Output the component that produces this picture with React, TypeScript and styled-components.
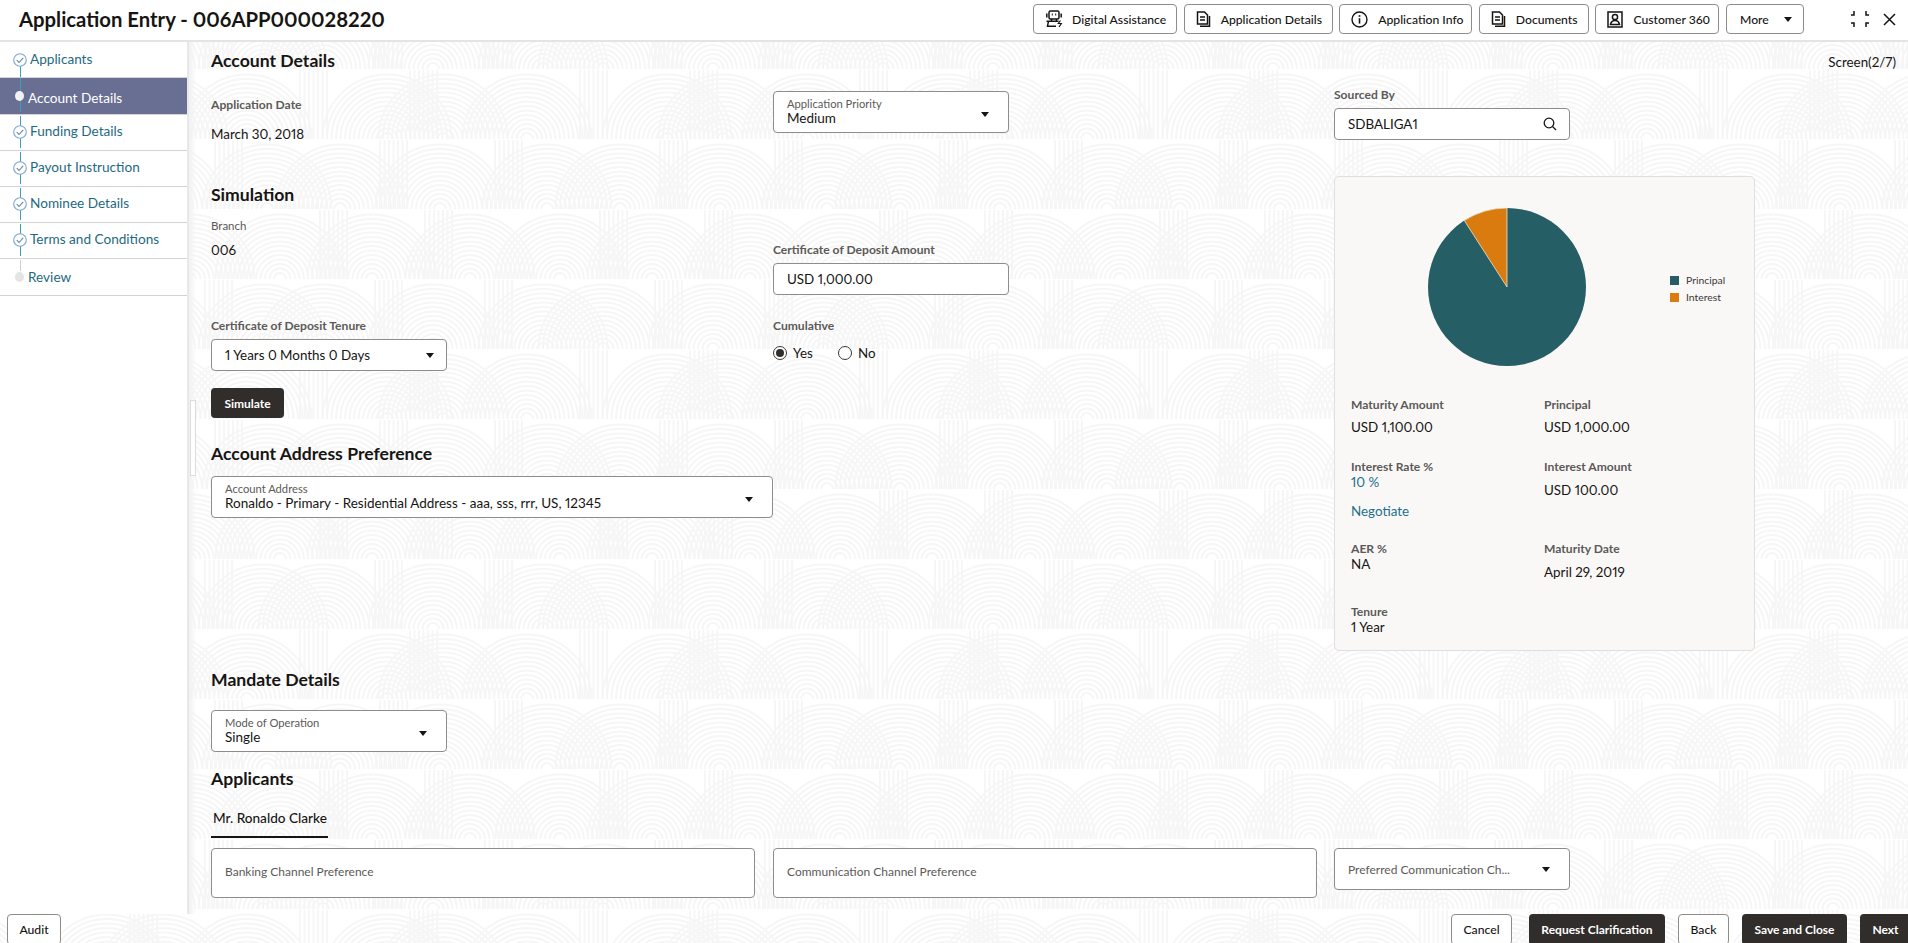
import React from "react";
import styled, { createGlobalStyle } from "styled-components";

const ROWS: number[][] = [
  [263, 153, 43],
  [107, 163, 247],
  [267, 160, 60],
  [190, 92, 0],
];
const STRIPES: number[][] = [
  [205, 95],
  [20, 130],
  [215, 100],
  [145, 40],
];

function buildTile(): string {
  let body = "";
  ROWS.forEach((centers, r) => {
    const top = r * 70;
    const bottom = top + 69;
    body += `<clipPath id="r${r}"><rect x="0" y="${top}" width="280" height="69"/></clipPath><g clip-path="url(#r${r})">`;
    centers.forEach((cx) => {
      for (const off of [-280, 0, 280]) {
        for (let rad = 6; rad <= 68; rad += 4.5) {
          body += `<circle cx="${cx + off}" cy="${bottom}" r="${rad}"/>`;
        }
      }
    });
    STRIPES[r].forEach((sx) => {
      for (let i = 0; i < 7; i += 1) {
        body += `<path d="M${sx + i * 4.5} ${top}V${bottom}"/>`;
      }
    });
    body += "</g>";
  });
  const svg = `<svg xmlns="http://www.w3.org/2000/svg" width="280" height="280"><g fill="none" stroke="#f6f6f6" stroke-width="2">${body}</g></svg>`;
  return `url("data:image/svg+xml,${encodeURIComponent(svg)}")`;
}

const Global = createGlobalStyle`
  html, body { margin: 0; padding: 0; height: 100%; overflow: hidden; background: #fff; }
  * { box-sizing: border-box; }
  body { font-family: Lato, "Noto Sans", sans-serif; color: #161513; font-variant-numeric: proportional-nums; }
`;

const Page = styled.div<{ $tile: string }>`
  width: 1908px;
  height: 943px;
  overflow: hidden;
  display: flex;
  flex-direction: column;
  background-color: #fff;
  background-image: ${(p) => p.$tile};
`;

const Header = styled.header`
  height: 42px;
  flex: none;
  background: #fff;
  border-bottom: 2px solid #e4e4e4;
  display: flex;
  align-items: center;
  padding: 0 12px 2px 19px;
`;
const Title = styled.h1`
  margin: 0;
  flex: 1;
  font-size: 20.3px;
  font-weight: 700;
  color: #161513;
`;
const Actions = styled.div`
  display: flex;
  gap: 6.6px;
  margin-right: 46px;
`;
const ActionButton = styled.button<{ $w: number; $pad?: number; $gap?: number }>`
  width: ${(p) => p.$w}px;
  height: 30px;
  background: #fff;
  border: 1px solid #8f8c8a;
  border-radius: 4px;
  padding: 0 0 0 ${(p) => p.$pad ?? 11}px;
  display: flex;
  align-items: center;
  font: 500 12.2px Lato, sans-serif;
  color: #161513;
  svg { flex: none; margin-right: ${(p) => p.$gap ?? 10}px; }
`;
const Caret = styled.span<{ $left?: number }>`
  display: inline-block;
  flex: none;
  width: 0;
  height: 0;
  margin-left: ${(p) => p.$left ?? 0}px;
  border-left: 4.5px solid transparent;
  border-right: 4.5px solid transparent;
  border-top: 5px solid #161513;
`;
const WindowTools = styled.div`
  display: flex;
  align-items: center;
  gap: 13px;
`;

const Body = styled.div`
  flex: 1;
  min-height: 0;
  display: flex;
`;
const Side = styled.nav`
  width: 189px;
  flex: none;
  background: #fff;
  border-right: 2px solid #e8e8e8;
`;
const StepRow = styled.div<{ $h: number; $active?: boolean; $offset: number; $indent: number }>`
  position: relative;
  height: ${(p) => p.$h}px;
  padding: ${(p) => p.$offset}px 0 0 ${(p) => p.$indent}px;
  line-height: 18px;
  font-size: 13.6px;
  color: ${(p) => (p.$active ? "#fff" : "#1f6a80")};
  background: ${(p) => (p.$active ? "#686f92" : "transparent")};
  border-bottom: 1px solid #d3d3d3;
`;
const Rail = styled.span<{ $top: number; $bottom: number; $pale?: boolean }>`
  position: absolute;
  left: 20px;
  width: 1px;
  top: ${(p) => p.$top}px;
  bottom: ${(p) => p.$bottom}px;
  background: ${(p) => (p.$pale ? "#cfcfcf" : "#3a9cc0")};
`;
const StepIcon = styled.svg<{ $y: number }>`
  position: absolute;
  left: 13px;
  top: ${(p) => p.$y}px;
`;
const StepDot = styled.span<{ $y: number; $pale?: boolean }>`
  position: absolute;
  left: 15px;
  top: ${(p) => p.$y}px;
  width: 9px;
  height: 10px;
  border-radius: 50%;
  background: ${(p) => (p.$pale ? "#e4e4e4" : "#f2f2f2")};
`;

const Main = styled.main`
  position: relative;
  flex: 1;
  min-width: 0;
  padding-left: 22px;
  overflow: hidden;
  &::before {
    content: "";
    position: absolute;
    left: 0;
    top: 0;
    bottom: 0;
    width: 7px;
    background: linear-gradient(90deg, #f1f1f1, rgba(241, 241, 241, 0));
  }
`;
const Handle = styled.div`
  position: absolute;
  left: 1px;
  top: 358px;
  width: 6px;
  height: 76px;
  border: 1px solid #dcdcdc;
  background: #fff;
`;
const ScreenCount = styled.div`
  position: absolute;
  top: 11px;
  right: 12px;
  font-size: 13.4px;
  line-height: 18px;
`;
const TopGrid = styled.div`
  display: grid;
  grid-template-columns: 1123px 421px;
`;
const Left = styled.div`
  display: flex;
  flex-direction: column;
`;
const Right = styled.div`
  padding-top: 45px;
`;
const Heading = styled.h2<{ $top: number }>`
  margin: ${(p) => p.$top}px 0 0;
  font-size: 17.6px;
  line-height: 24px;
  font-weight: 700;
  color: #161513;
`;
const TwoCols = styled.div<{ $top: number }>`
  display: grid;
  grid-template-columns: 562px 236px;
  margin-top: ${(p) => p.$top}px;
`;
const FieldLabel = styled.div<{ $top?: number; $light?: boolean }>`
  margin-top: ${(p) => p.$top ?? 0}px;
  font-size: ${(p) => (p.$light ? 11.5 : 12.1)}px;
  font-weight: ${(p) => (p.$light ? 400 : 700)};
  line-height: 16px;
  color: #5c5a58;
`;
const PlainValue = styled.div<{ $top: number }>`
  margin-top: ${(p) => p.$top}px;
  font-size: 13.4px;
  line-height: 20px;
  color: #161513;
`;
const InputBox = styled.div<{ $w?: number; $top?: number }>`
  width: ${(p) => (p.$w ? `${p.$w}px` : "100%")};
  height: 32px;
  margin-top: ${(p) => p.$top ?? 5}px;
  background: #fff;
  border: 1px solid #8f8c8a;
  border-radius: 4px;
  padding: 0 12px 0 13px;
  display: flex;
  align-items: center;
  justify-content: space-between;
  font-size: 13.4px;
`;
const SelectBox = styled.div<{ $w: number; $top?: number }>`
  width: ${(p) => p.$w}px;
  height: 42px;
  margin-top: ${(p) => p.$top ?? 0}px;
  background: #fff;
  border: 1px solid #8f8c8a;
  border-radius: 4px;
  padding: 5px 19px 0 13px;
  display: flex;
  justify-content: space-between;
  align-items: center;
`;
const SelectText = styled.div`
  align-self: flex-start;
  display: flex;
  flex-direction: column;
`;
const SelectLabel = styled.span`
  font-size: 11.2px;
  line-height: 14px;
  color: #5c5a58;
`;
const SelectValue = styled.span`
  font-size: 13.5px;
  line-height: 15px;
  color: #161513;
`;
const RadioRow = styled.div`
  display: flex;
  align-items: center;
  height: 20px;
  margin-top: 9px;
  font-size: 13.4px;
`;
const RadioMark = styled.span<{ $on?: boolean }>`
  width: 14px;
  height: 14px;
  border: 1.5px solid #3a3836;
  border-radius: 50%;
  background: #fff;
  margin-right: 6px;
  display: flex;
  align-items: center;
  justify-content: center;
  &::after {
    content: "";
    width: 8px;
    height: 8px;
    border-radius: 50%;
    background: ${(p) => (p.$on ? "#312d2a" : "transparent")};
  }
`;
const RadioOption = styled.label`
  display: flex;
  align-items: center;
  width: 65px;
`;
const DarkButton = styled.button<{ $w: number; $top?: number }>`
  width: ${(p) => p.$w}px;
  height: 30px;
  margin-top: ${(p) => p.$top ?? 0}px;
  border: none;
  border-radius: 4px;
  background: #312d2a;
  color: #fff;
  font: 700 12px Lato, sans-serif;
  padding: 0;
  flex: none;
`;
const OutlineButton = styled.button<{ $w: number }>`
  width: ${(p) => p.$w}px;
  height: 31px;
  border: 1px solid #8f8c8a;
  border-radius: 4px;
  background: #fff;
  color: #161513;
  font: 500 12.2px Lato, sans-serif;
  padding: 0;
  flex: none;
`;

const Card = styled.section`
  margin-top: 36px;
  height: 475px;
  background: #faf8f7;
  border: 1px solid #dfdfdf;
  border-radius: 5px;
  padding-left: 16px;
`;
const ChartRow = styled.div`
  height: 221px;
  position: relative;
`;
const Pie = styled.svg`
  position: absolute;
  left: 76px;
  top: 30px;
`;
const Legend = styled.ul`
  position: absolute;
  left: 319px;
  top: 97px;
  list-style: none;
  margin: 0;
  padding: 0;
  display: flex;
  flex-direction: column;
  gap: 5px;
`;
const LegendItem = styled.li`
  display: flex;
  align-items: center;
  font-size: 10.4px;
  line-height: 12px;
  color: #3a3836;
`;
const Swatch = styled.span<{ $c: string }>`
  width: 9px;
  height: 9px;
  background: ${(p) => p.$c};
  margin-right: 7px;
`;
const Details = styled.div`
  display: grid;
  grid-template-columns: 193px 193px;
  grid-template-rows: 62px 82px 63px auto;
`;
const DetailLabel = styled.div`
  font-size: 12.1px;
  font-weight: 700;
  line-height: 14px;
  color: #5c5a58;
`;
const DetailValue = styled.div<{ $top?: number; $teal?: boolean }>`
  margin-top: ${(p) => p.$top ?? 0}px;
  font-size: 13.4px;
  line-height: 16px;
  color: ${(p) => (p.$teal ? "#1a6f8c" : "#161513")};
`;

const MandateBlock = styled.div`
  display: flex;
  flex-direction: column;
`;
const TabLabel = styled.div`
  margin-top: 17px;
  width: 117px;
  height: 30px;
  padding: 0 0 0 2px;
  white-space: nowrap;
  line-height: 20px;
  font-size: 13.6px;
  font-weight: 500;
  color: #161513;
  border-bottom: 2px solid #161513;
`;
const ChannelRow = styled.div`
  margin-top: 10px;
  display: grid;
  grid-template-columns: 562px 561px 236px;
  align-items: start;
`;
const ChannelBox = styled.div`
  width: 544px;
  height: 50px;
  background: #fff;
  border: 1px solid #8f8c8a;
  border-radius: 4px;
  padding: 0 0 3px 13px;
  display: flex;
  align-items: center;
  font-size: 12px;
  color: #5c5a58;
`;
const ChannelSelect = styled(SelectBox)`
  padding: 0 19px 0 13px;
  font-size: 12px;
  color: #5c5a58;
`;
const Footer = styled.footer`
  flex: none;
  height: 29px;
  display: flex;
  justify-content: space-between;
  padding-left: 7px;
  margin-right: -3px;
`;
const FooterRight = styled.div`
  display: flex;
  gap: 13px;
`;
const FooterPrimary = styled(DarkButton)`
  height: 31px;
  margin-left: 4px;
`;
const FooterDark = styled(DarkButton)`
  height: 31px;
`;

const DocIcon = () => (
  <svg width="15" height="17" viewBox="0 0 15 17" fill="none" stroke="#161513" strokeWidth="1.5">
    <path d="M1.500 1h7l3 3v9h-10z" />
    <path d="M4 6h5M4 9h5" />
    <path d="M13.500 5v10.200H4" />
  </svg>
);
const BotIcon = () => (
  <svg width="18" height="18" viewBox="0 0 18 18" fill="none" stroke="#161513" strokeWidth="1.5">
    <rect x="4" y="1" width="10" height="8" rx="1.500" />
    <path d="M6.800 4.500h1M10.200 4.500h1" strokeWidth="2" />
    <path d="M1.800 3.500v4M16.200 3.500v4" />
    <path d="M6.500 9v2M11.500 9v2M1.500 11.200h12" />
    <path d="M3.500 11.200l-1 5h8.500" />
    <path d="M15.500 10.500l-2.200 3h3l-2.300 3.500" strokeWidth="1.200" />
  </svg>
);
const InfoIcon = () => (
  <svg width="17" height="17" viewBox="0 0 17 17" fill="none" stroke="#161513" strokeWidth="1.4">
    <circle cx="8.500" cy="8.500" r="7.500" />
    <path d="M8.500 7.200v5.400" strokeWidth="1.600" />
    <path d="M8.500 4.200v1.600" strokeWidth="1.800" />
  </svg>
);
const ContactIcon = () => (
  <svg width="16" height="17" viewBox="0 0 16 17" fill="none" stroke="#161513" strokeWidth="1.5">
    <rect x="1" y="1" width="14" height="15" />
    <circle cx="8" cy="6" r="2.600" />
    <path d="M3.500 13.500c.6-3 2.200-4 4.500-4s3.900 1 4.500 4z" />
  </svg>
);
const Collapse = () => (
  <svg width="20" height="18" viewBox="0 0 20 18" fill="none" stroke="#161513" strokeWidth="1.5">
    <path d="M4 1v4H1M16 1v4h3M4 17v-4H1M16 17v-4h3" />
  </svg>
);
const Close = () => (
  <svg width="13" height="13" viewBox="0 0 13 13" fill="none" stroke="#161513" strokeWidth="1.5">
    <path d="M1 1l11 11M12 1L1 12" />
  </svg>
);
const Tick = ({ y }: { y: number }) => (
  <StepIcon $y={y} width="14" height="14" viewBox="0 0 14 14" fill="#fff" stroke="#7da6cf" strokeWidth="1.1">
    <circle cx="7" cy="7" r="6.300" />
    <path d="M3.800 7.200l2.200 2.300 4.200-4.600" fill="none" stroke="#5f87a3" />
  </StepIcon>
);

const steps = [
  { t: "Applicants", h: 36, o: 8, i: 30, kind: "first", y: 11 },
  { t: "Account Details", h: 37, o: 11, i: 28, kind: "active", y: 13 },
  { t: "Funding Details", h: 36, o: 7, i: 30, kind: "done", y: 10 },
  { t: "Payout Instruction", h: 36, o: 7, i: 30, kind: "done", y: 10 },
  { t: "Nominee Details", h: 36, o: 7, i: 30, kind: "done", y: 10 },
  { t: "Terms and Conditions", h: 36, o: 7, i: 30, kind: "done", y: 10 },
  { t: "Review", h: 37, o: 9, i: 28, kind: "last", y: 13 },
];

const Select = ({ label, value, w, top }: { label: string; value: string; w: number; top?: number }) => (
  <SelectBox $w={w} $top={top}>
    <SelectText>
      <SelectLabel>{label}</SelectLabel>
      <SelectValue>{value}</SelectValue>
    </SelectText>
    <Caret />
  </SelectBox>
);

export default function App() {
  const tile = React.useMemo(buildTile, []);
  const r = 79;
  const a = (2 * Math.PI) / 11;
  const px = 80 - r * Math.sin(a);
  const py = 80 - r * Math.cos(a);
  return (
    <Page $tile={tile}>
      <Global />
      <Header>
        <Title>Application Entry - 006APP000028220</Title>
        <Actions>
          <ActionButton $w={144} $gap={9}><BotIcon />Digital Assistance</ActionButton>
          <ActionButton $w={149} $pad={11}><DocIcon />Application Details</ActionButton>
          <ActionButton $w={133}><InfoIcon />Application Info</ActionButton>
          <ActionButton $w={110} $pad={11}><DocIcon />Documents</ActionButton>
          <ActionButton $w={124} $pad={11}><ContactIcon />Customer 360</ActionButton>
          <ActionButton $w={78} $pad={13}>More<Caret $left={15} /></ActionButton>
        </Actions>
        <WindowTools>
          <Collapse />
          <Close />
        </WindowTools>
      </Header>
      <Body>
        <Side>
          {steps.map((s) => (
            <StepRow key={s.t} $h={s.h} $offset={s.o} $indent={s.i} $active={s.kind === "active"}>
              {s.kind === "first" && <Rail $top={23} $bottom={0} />}
              {s.kind === "active" && <Rail $top={0} $bottom={2} />}
              {s.kind === "done" && <Rail $top={1} $bottom={2} />}
              {s.kind === "last" && <Rail $top={1} $bottom={24} $pale />}
              {s.kind === "active" || s.kind === "last" ? (
                <StepDot $y={13} $pale={s.kind === "last"} />
              ) : (
                <Tick y={s.y} />
              )}
              {s.t}
            </StepRow>
          ))}
        </Side>
        <Main>
          <Handle />
          <ScreenCount>Screen(2/7)</ScreenCount>
          <TopGrid>
            <Left>
              <Heading $top={7}>Account Details</Heading>
              <TwoCols $top={18}>
                <div>
                  <FieldLabel $top={6}>Application Date</FieldLabel>
                  <PlainValue $top={11}>March 30, 2018</PlainValue>
                </div>
                <Select label="Application Priority" value="Medium" w={236} />
              </TwoCols>
              <Heading $top={39}>Simulation</Heading>
              <TwoCols $top={11}>
                <div>
                  <FieldLabel $light>Branch</FieldLabel>
                  <PlainValue $top={6}>006</PlainValue>
                </div>
                <div>
                  <FieldLabel $top={24}>Certificate of Deposit Amount</FieldLabel>
                  <InputBox>USD 1,000.00</InputBox>
                </div>
              </TwoCols>
              <TwoCols $top={23}>
                <div>
                  <FieldLabel>Certificate of Deposit Tenure</FieldLabel>
                  <InputBox $w={236}>
                    1 Years 0 Months 0 Days
                    <Caret />
                  </InputBox>
                </div>
                <div>
                  <FieldLabel>Cumulative</FieldLabel>
                  <RadioRow>
                    <RadioOption><RadioMark $on />Yes</RadioOption>
                    <RadioOption><RadioMark />No</RadioOption>
                  </RadioRow>
                </div>
              </TwoCols>
              <DarkButton $w={73} $top={17}>Simulate</DarkButton>
              <Heading $top={24}>Account Address Preference</Heading>
              <Select
                label="Account Address"
                value="Ronaldo - Primary - Residential Address - aaa, sss, rrr, US, 12345"
                w={562}
                top={10}
              />
            </Left>
            <Right>
              <FieldLabel>Sourced By</FieldLabel>
              <InputBox $w={236}>
                SDBALIGA1
                <svg width="14" height="14" viewBox="0 0 14 14" fill="none" stroke="#161513" strokeWidth="1.3">
                  <circle cx="6" cy="6" r="4.800" />
                  <path d="M9.500 9.500l3.500 3.500" />
                </svg>
              </InputBox>
              <Card>
                <ChartRow>
                  <Pie width="160" height="160" viewBox="0 0 160 160">
                    <circle cx="80" cy="80" r={r} fill="#265e66" />
                    <path
                      d={`M80 80L${px} ${py}A${r} ${r} 0 0 1 80 1Z`}
                      fill="#d97b0f"
                      stroke="#f3e3cf"
                      strokeWidth="0.8"
                    />
                  </Pie>
                  <Legend>
                    <LegendItem><Swatch $c="#265e66" />Principal</LegendItem>
                    <LegendItem><Swatch $c="#d97b0f" />Interest</LegendItem>
                  </Legend>
                </ChartRow>
                <Details>
                  <div>
                    <DetailLabel>Maturity Amount</DetailLabel>
                    <DetailValue $top={7}>USD 1,100.00</DetailValue>
                  </div>
                  <div>
                    <DetailLabel>Principal</DetailLabel>
                    <DetailValue $top={7}>USD 1,000.00</DetailValue>
                  </div>
                  <div>
                    <DetailLabel>Interest Rate %</DetailLabel>
                    <DetailValue $teal>10 %</DetailValue>
                    <DetailValue $top={13} $teal>Negotiate</DetailValue>
                  </div>
                  <div>
                    <DetailLabel>Interest Amount</DetailLabel>
                    <DetailValue $top={8}>USD 100.00</DetailValue>
                  </div>
                  <div>
                    <DetailLabel>AER %</DetailLabel>
                    <DetailValue>NA</DetailValue>
                  </div>
                  <div>
                    <DetailLabel>Maturity Date</DetailLabel>
                    <DetailValue $top={8}>April 29, 2019</DetailValue>
                  </div>
                  <div>
                    <DetailLabel>Tenure</DetailLabel>
                    <DetailValue>1 Year</DetailValue>
                  </div>
                </Details>
              </Card>
            </Right>
          </TopGrid>
          <MandateBlock>
            <Heading $top={17}>Mandate Details</Heading>
            <Select label="Mode of Operation" value="Single" w={236} top={18} />
            <Heading $top={15}>Applicants</Heading>
            <TabLabel>Mr. Ronaldo Clarke</TabLabel>
            <ChannelRow>
              <ChannelBox>Banking Channel Preference</ChannelBox>
              <ChannelBox>Communication Channel Preference</ChannelBox>
              <ChannelSelect $w={236}>
                Preferred Communication Ch...
                <Caret />
              </ChannelSelect>
            </ChannelRow>
          </MandateBlock>
        </Main>
      </Body>
      <Footer>
        <OutlineButton $w={54}>Audit</OutlineButton>
        <FooterRight>
          <OutlineButton $w={61}>Cancel</OutlineButton>
          <FooterPrimary $w={136}>Request Clarification</FooterPrimary>
          <OutlineButton $w={51}>Back</OutlineButton>
          <FooterDark $w={105}>Save and Close</FooterDark>
          <FooterDark $w={51}>Next</FooterDark>
        </FooterRight>
      </Footer>
    </Page>
  );
}
